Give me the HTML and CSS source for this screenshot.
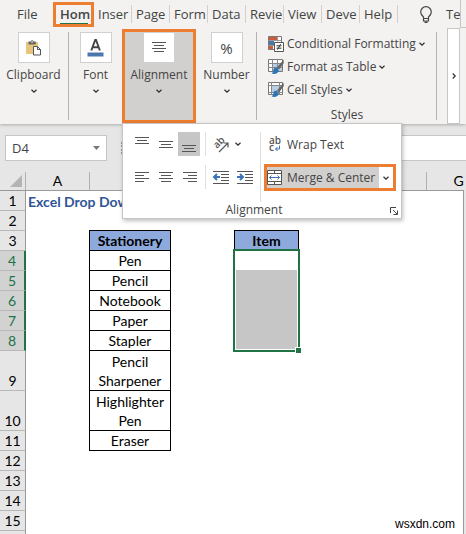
FILE: index.html
```
<!DOCTYPE html>
<html lang="en">
<head>
  <meta charset="UTF-8" />
  <meta name="viewport" content="width=device-width, initial-scale=1.0"/>
  <title>Excel Drop Down</title>
  <link rel="stylesheet" href="styles.css">
</head>
<body>

<!-- shared icons -->
<svg class="defs" width="0" height="0" aria-hidden="true">
  <symbol id="chevron" viewBox="0 0 6 4"><path d="M.5 .7 3 3.1 5.5 .7" fill="none" stroke="#333" stroke-width="1.3"/></symbol>
  <symbol id="brush" viewBox="0 0 16 16">
    <path d="M15.5 .5 9 8.5l2 2L15.800 4z" fill="#666"/>
    <path d="M8.500 8.500c-2 0-3 1.300-3.200 3-.1 1.300-.8 2.300-1.800 3 3 1 7 .5 7.300-3.500z" fill="#2e75b6"/>
  </symbol>
</svg>

<!-- Ribbon -->
<header class="ribbon">
  <nav class="tabs">
    <button class="tab file">File</button>
    <button class="tab active"><span>Hom</span></button>
    <button class="tab">Inser</button>
    <button class="tab">Page</button>
    <button class="tab">Form</button>
    <button class="tab">Data</button>
    <button class="tab">Revie</button>
    <button class="tab">View</button>
    <button class="tab">Deve</button>
    <button class="tab">Help</button>
    <button class="tell">
      <svg width="12" height="17" viewBox="0 0 12 17" fill="none" stroke="#444" stroke-width="1.200">
        <path d="M3.500 12.500V11C2 9.600.7 8 .7 6a5.300 5.300 0 0 1 10.600 0c0 2-1.300 3.600-2.800 5v1.500zM3.500 12.500V15h5v-2.500M4.500 16.300h3"/>
      </svg>
      <span>Te</span>
    </button>
    <span class="edge"></span>
  </nav>

  <div class="groups">
    <div class="group clipboard">
      <button class="big">
        <span class="tile">
          <svg width="17" height="17" viewBox="0 0 17 17">
            <path d="M1 3h12v12H1z" fill="#e8c47c"/>
            <path d="M3.500 5.500V2.500H5.500a1.700 1.700 0 0 1 3.200 0h2v3z" fill="#666"/>
            <path d="M6.200 2.500h1.800v1H6.200z" fill="#fff"/>
            <path d="M8.500 7.500h4l3 3v5.500h-7z" fill="#fff" stroke="#555"/>
            <path d="M12.500 7.500v3h3" fill="none" stroke="#555"/>
          </svg>
        </span>
        <span>Clipboard</span>
        <svg class="chev"><use href="#chevron"/></svg>
      </button>
    </div>
    <div class="group font">
      <button class="big">
        <span class="tile">
          <svg width="17" height="18" viewBox="0 0 17 18">
            <path d="M4.300 11.500 8.200 1h.8l3.900 10.500M5.500 8.200h6.200" fill="none" stroke="#444" stroke-width="1.900"/>
            <path d="M.5 13.500h16v4H.5z" fill="#4a78ad"/>
          </svg>
        </span>
        <span>Font</span>
        <svg class="chev"><use href="#chevron"/></svg>
      </button>
    </div>
    <div class="group alignment">
      <button class="big open">
        <span class="tile">
          <svg width="14" height="13" viewBox="0 0 14 13" stroke="#555"><path d="M0 1.500h14M2 4.500h10M0 7.500h14M2 10.500h10"/></svg>
        </span>
        <span>Alignment</span>
        <svg class="chev"><use href="#chevron"/></svg>
      </button>

      <!-- Alignment flyout -->
      <div class="flyout">
        <div class="tools">
          <div class="pad">
            <div class="line">
              <button class="tool" aria-label="Top align"><svg class="al" viewBox="0 0 14 17"><path d="M0 1.500h14M2 4.500h10M0 7.500h14"/></svg></button>
              <button class="tool" aria-label="Middle align"><svg class="al" viewBox="0 0 14 17"><path d="M0 5.500h14M2 8.500h10M0 11.500h14"/></svg></button>
              <button class="tool on" aria-label="Bottom align"><svg class="al" viewBox="0 0 14 17"><path d="M0 9.500h14M2 12.500h10M0 15.500h14"/></svg></button>
            </div>
            <div class="line">
              <button class="tool" aria-label="Align left"><svg class="al" viewBox="0 0 14 17"><path d="M0 3.500h14M0 6.500h9M0 9.500h14M0 12.500h9"/></svg></button>
              <button class="tool" aria-label="Center"><svg class="al" viewBox="0 0 14 17"><path d="M0 3.500h14M2 6.500h10M0 9.500h14M2 12.500h10"/></svg></button>
              <button class="tool" aria-label="Align right"><svg class="al" viewBox="0 0 14 17"><path d="M0 3.500h14M5 6.500h9M0 9.500h14M5 12.500h9"/></svg></button>
            </div>
          </div>
          <div class="pad split">
            <div class="line">
              <button class="tool orient" aria-label="Orientation">
                <svg width="17" height="17" viewBox="0 0 17 17">
                  <text class="ab" x="5" y="13" transform="rotate(-45 5 13)">ab</text>
                  <path d="M7 16 15.500 7.500M11.500 7h4.500v4.500" fill="none" stroke="#555" stroke-width="1.200"/>
                </svg>
                <svg class="chev"><use href="#chevron"/></svg>
              </button>
            </div>
            <div class="line">
              <button class="tool" aria-label="Decrease indent">
                <svg width="16" height="14" viewBox="0 0 16 14"><path d="M0 1.500h16M8 4.500h8M8 7.500h8M8 10.500h8M0 13.500h16" stroke="#555"/><path d="M7 7H1.500M4 4 1 7l3 3" fill="none" stroke="#3b74b4" stroke-width="2"/></svg>
              </button>
              <button class="tool" aria-label="Increase indent">
                <svg width="16" height="14" viewBox="0 0 16 14"><path d="M0 1.500h16M8 4.500h8M8 7.500h8M8 10.500h8M0 13.500h16" stroke="#555"/><path d="M0 7h5.500M3 4l3 3-3 3" fill="none" stroke="#3b74b4" stroke-width="2"/></svg>
              </button>
            </div>
          </div>
          <div class="pad wide">
            <button class="wrap">
              <svg width="14" height="18" viewBox="0 0 14 18">
                <text class="abc" x="1" y="9">ab</text>
                <text class="abc" x="1" y="16">c</text>
                <path d="M11.500 10.500v3.500H7.500M9.500 12l-2 2 2 2" fill="none" stroke="#3b74b4"/>
              </svg>
              Wrap Text
            </button>
            <div class="merge">
              <button class="merge-main">
                <svg width="15" height="15" viewBox="0 0 15 15" fill="none">
                  <path d="M.5 .5h14v14H.5z" fill="#fff"/>
                  <path d="M.5 .5h14v14H.5zM.5 3.500h14M.5 11.500h14M7.500 .5v3M7.500 11.500v3" stroke="#555"/>
                  <path d="M2.500 7.500h10M4.500 5.500l-2 2 2 2M10.500 5.500l2 2-2 2" stroke="#3b74b4"/>
                </svg>
                Merge &amp; Center
              </button>
              <button class="merge-more" aria-label="More merge options"><svg class="chev"><use href="#chevron"/></svg></button>
            </div>
          </div>
        </div>
        <div class="caption">
          Alignment
          <button class="launcher" aria-label="Alignment settings">
            <svg width="8" height="8" viewBox="0 0 8 8" fill="none" stroke="#444"><path d="M.5 6V.5H6M3 3l4 4M7.500 3.500v4h-4"/></svg>
          </button>
        </div>
      </div>
    </div>
    <div class="group number">
      <button class="big">
        <span class="tile percent">%</span>
        <span>Number</span>
        <svg class="chev"><use href="#chevron"/></svg>
      </button>
    </div>
    <div class="group styles">
      <button class="small">
        <svg width="16" height="16" viewBox="0 0 16 16">
          <path d="M.5 .5h13v13H.5z" fill="#fff" stroke="#777"/>
          <path d="M1 1h8v3.500H1zM1 9.500h4V13H1z" fill="#d05a3c"/><path d="M1 5h5v4H1z" fill="#4a78ad"/>
          <path d="M.5 4.500h13M.5 9.500h6M9.500 .5v5" stroke="#999"/>
          <path d="M6.500 6.500h9v9h-9z" fill="#fff" stroke="#555"/>
          <path d="M8.500 9.800h5M8.500 12.200h5M12.500 8.200l-3 5.500" stroke="#333"/>
        </svg>
        Conditional Formatting <svg class="chev"><use href="#chevron"/></svg>
      </button>
      <button class="small">
        <svg width="16" height="16" viewBox="0 0 16 16">
          <path d="M.5 .5h14v12H.5z" fill="#fff" stroke="#777"/>
          <path d="M5 5h9v7H5z" fill="#b9cde5"/>
          <path d="M.5 4.500h14M.5 8.500h14M4.500 .5v12M9.500 .5v12" stroke="#888"/>
          <use href="#brush"/>
        </svg>
        Format as Table <svg class="chev"><use href="#chevron"/></svg>
      </button>
      <button class="small">
        <svg width="16" height="16" viewBox="0 0 16 16">
          <path d="M.5 .5h14v12H.5z" fill="#fff" stroke="#777"/>
          <path d="M4 4h8v6H4z" fill="#b9cde5"/>
          <path d="M.5 3.500h14M3.500 .5v12M11.500 .5v12M.5 10.500h14" stroke="#888"/>
          <use href="#brush"/>
        </svg>
        Cell Styles <svg class="chev"><use href="#chevron"/></svg>
      </button>
      <div class="group-name">Styles</div>
    </div>
    <button class="scroll" aria-label="Scroll ribbon">
      <svg width="4" height="6" viewBox="0 0 4 6"><path d="M.7 .5 3.200 3 .7 5.500" fill="none" stroke="#333" stroke-width="1.200"/></svg>
    </button>
  </div>
</header>

<!-- Formula bar -->
<div class="formula-bar">
  <div class="name-box">
    <input type="text" value="D4" aria-label="Name box">
    <button aria-label="Names"><svg width="7" height="4" viewBox="0 0 7 4"><path d="M0 0h7L3.500 4z" fill="#777"/></svg></button>
  </div>
  <span class="dots"></span>
  <input class="formula" type="text" aria-label="Formula">
</div>

<!-- Sheet -->
<main class="sheet">
  <table>
    <colgroup>
      <col class="c-head"><col class="c-a"><col class="c-b"><col class="c-a"><col class="c-a"><col class="c-a"><col class="c-a"><col class="c-a">
    </colgroup>
    <thead>
      <tr><th class="corner"><svg width="12" height="12" viewBox="0 0 12 12"><path d="M12 0v12H0z" fill="#b4b4b4"/></svg></th><th>A</th><th></th><th></th><th></th><th></th><th></th><th>G</th></tr>
    </thead>
    <tbody>
      <tr><th>1</th><td class="title" colspan="7">Excel Drop Down</td></tr>
      <tr><th>2</th><td colspan="7"></td></tr>
      <tr><th>3</th><td></td><td class="box head">Stationery</td><td></td><td class="box head">Item</td><td colspan="3"></td></tr>
      <tr class="sel"><th>4</th><td></td><td class="box">Pen</td><td></td><td class="range-start"><div class="range"></div></td><td colspan="3"></td></tr>
      <tr class="sel"><th>5</th><td></td><td class="box">Pencil</td><td colspan="5"></td></tr>
      <tr class="sel"><th>6</th><td></td><td class="box">Notebook</td><td colspan="5"></td></tr>
      <tr class="sel"><th>7</th><td></td><td class="box">Paper</td><td colspan="5"></td></tr>
      <tr class="sel"><th>8</th><td></td><td class="box">Stapler</td><td colspan="5"></td></tr>
      <tr class="tall"><th>9</th><td></td><td class="box">Pencil<br>Sharpener</td><td colspan="5"></td></tr>
      <tr class="tall"><th>10</th><td></td><td class="box">Highlighter<br>Pen</td><td colspan="5"></td></tr>
      <tr><th>11</th><td></td><td class="box">Eraser</td><td colspan="5"></td></tr>
      <tr><th>12</th><td colspan="7"></td></tr>
      <tr><th>13</th><td colspan="7"></td></tr>
      <tr><th>14</th><td colspan="7"></td></tr>
      <tr><th>15</th><td colspan="7"></td></tr>
      <tr><th></th><td colspan="7"></td></tr>
    </tbody>
  </table>
</main>

<div class="watermark">wsxdn.com</div>

</body>
</html>
```
FILE: styles.css
```
* { margin: 0; padding: 0; box-sizing: border-box; }

html, body {
  height: 100%;
  overflow: hidden;
}

body {
  display: flex;
  flex-direction: column;
  position: relative;
  background: #e6e6e6;
  color: #444;
  font-family: "Open Sans", "Noto Sans", sans-serif;
  font-size: 12px;
}

button, input {
  font: inherit;
  color: inherit;
  background: none;
  border: none;
}

svg { display: block; flex: none; overflow: visible; }
.defs { position: absolute; }
.chev { width: 6px; height: 4px; }

/* Ribbon */
.ribbon {
  position: relative;
  z-index: 2;
  background: #f3f2f1;
  box-shadow: 0 1px 3px rgba(0, 0, 0, 0.25);
}

.tabs {
  display: flex;
  align-items: center;
  height: 28px;
  font-size: 13px;
}

.tab {
  width: 38px;
  height: 18px;
  padding-left: 4px;
  border-right: 1px solid #d2d0ce;
  line-height: 18px;
  text-align: left;
  white-space: nowrap;
  overflow: hidden;
}

.tab.file {
  width: 53px;
  padding-left: 17px;
  border: none;
}

.tab.active {
  width: 41px;
  height: 25px;
  border: 3px solid #ed7d31;
  font-weight: 600;
}

.tab.active span {
  display: block;
  width: 28px;
  border-bottom: 1px solid #217346;
}

.tell {
  display: flex;
  align-items: center;
  gap: 14px;
  flex: 1;
  padding-left: 22px;
  overflow: hidden;
}

.edge {
  width: 6px;
  height: 28px;
  border-left: 1px solid #c8c6c4;
  border-bottom: 1px solid #c8c6c4;
}

.groups {
  display: flex;
  height: 96px;
}

.group { position: relative; padding: 4px 0; }

.clipboard { width: 69px; }
.font { width: 53px; }
.alignment { width: 74px; padding: 1px 0; }
.number { width: 61px; }

.clipboard::after, .number::after, .styles::after {
  content: "";
  position: absolute;
  top: 4px;
  right: 0;
  bottom: 4px;
  border-right: 1px solid #b5b3b1;
}

.big {
  display: flex;
  flex-direction: column;
  align-items: center;
  width: 100%;
  line-height: 16px;
}

.big .chev { margin-top: 6px; }
.clipboard .big { padding-right: 2px; }

.big.open {
  height: 94px;
  background: #d2d0ce;
  border: 3px solid #ed7d31;
}

.tile {
  display: flex;
  align-items: center;
  justify-content: center;
  width: 32px;
  height: 31px;
  margin-bottom: 4px;
  background: #fff;
  border: 1px solid #d2d0ce;
}

.percent { font-size: 15px; }

.group.styles {
  flex: 1;
  display: flex;
  flex-direction: column;
  padding: 4px 0 0 11px;
}

.small {
  display: flex;
  flex: none;
  align-items: center;
  gap: 3px;
  height: 23px;
  white-space: nowrap;
}

.group-name {
  margin-top: 6px;
  padding-right: 11px;
  line-height: 16px;
  text-align: center;
}

.scroll {
  display: flex;
  align-items: center;
  justify-content: center;
  width: 13px;
  margin: 0 6px 0 10px;
  background: #fff;
  border: 1px solid #c8c6c4;
}

/* Alignment flyout */
.flyout {
  position: absolute;
  top: 95px;
  left: 0;
  width: 280px;
  background: #fff;
  border: 1px solid #c8c6c4;
  box-shadow: 1px 2px 4px rgba(0, 0, 0, 0.25);
}

.tools {
  display: flex;
  height: 78px;
  padding: 8px 5px 0 7px;
}

.pad {
  display: flex;
  flex-direction: column;
  gap: 9px;
}

.line {
  display: flex;
  height: 24px;
}

.tool {
  display: flex;
  align-items: center;
  justify-content: center;
  gap: 6px;
  width: 24px;
}

.tool.on { width: 22px; background: #c6c6c6; }
.tool.orient { width: 34px; }
.al { width: 14px; height: 17px; stroke: #555; }

.split {
  width: 56px;
  margin-left: 3px;
  border-right: 1px solid #e1dfdd;
}

.split .line {
  padding-left: 3px;
  border-left: 1px solid #e1dfdd;
}

.wide { flex: 1; gap: 8px; padding-left: 3px; }

.wrap, .merge-main {
  display: flex;
  align-items: center;
  gap: 5px;
  white-space: nowrap;
}

.wrap { height: 24px; padding-left: 4px; }

.merge {
  display: flex;
  height: 27px;
  border: 3px solid #ed7d31;
}

.merge-main { flex: 1; background: #d2d0ce; }

.merge-more {
  display: flex;
  align-items: center;
  justify-content: center;
  width: 14px;
}

.caption {
  position: relative;
  height: 16px;
  line-height: 16px;
  padding-right: 16px;
  text-align: center;
}

.launcher {
  position: absolute;
  right: 3px;
  bottom: 3px;
}

.ab, .abc {
  font-size: 10px;
  font-weight: 600;
  fill: #555;
}

/* Formula bar */
.formula-bar {
  display: flex;
  align-items: center;
  height: 48px;
  padding-left: 5px;
}

.name-box {
  display: flex;
  width: 102px;
  height: 26px;
  background: #fff;
  border: 1px solid #c6c6c6;
}

.name-box input {
  flex: 1;
  min-width: 0;
  padding-left: 6px;
  font-size: 13px;
}

.name-box button { padding: 0 6px; }

.dots {
  width: 2px;
  height: 12px;
  margin: 0 14px;
  border-left: 2px dotted #999;
}

.formula {
  flex: 1;
  min-width: 0;
  height: 26px;
  background: #fff;
  border: 1px solid #c6c6c6;
  border-right: none;
}

/* Sheet */
.sheet {
  flex: 1;
  min-height: 0;
  margin-right: 2px;
  overflow: hidden;
  position: relative;
}

.sheet::after {
  content: "";
  position: absolute;
  top: 18px;
  right: 0;
  bottom: 0;
  border-right: 1px solid #999;
}

table {
  width: 491px;
  table-layout: fixed;
  border-spacing: 0;
  color: #000;
  font-family: Lato, "Open Sans", sans-serif;
  font-size: 14px;
  line-height: 19px;
}

.c-head { width: 26px; }
.c-a { width: 64px; }
.c-b { width: 81px; }

thead th {
  height: 19px;
  line-height: 18px;
  border-right: 1px solid #b0b0b0;
  border-bottom: 1px solid #999;
  font-weight: normal;
}

.corner svg { margin-left: 10px; }

tbody th {
  height: 20px;
  border-right: 1px solid #999;
  border-bottom: 1px solid #b8b8b8;
  background: #e6e6e6;
  font-weight: normal;
  vertical-align: bottom;
}

tbody td { background: #fff; }

.sel th {
  background: #d2d2d2;
  border-right: 2px solid #217346;
  color: #217346;
}

.title {
  padding-left: 2px;
  color: #2f5597;
  font-weight: bold;
}

.box {
  border-bottom: 1px solid #000;
  border-right: 1px solid #000;
  box-shadow: -1px 0 0 #000;
  text-align: center;
}

.head {
  background: #8ea9db;
  box-shadow: -1px 0 0 #000, 0 -1px 0 #000, -1px -1px 0 #000;
  font-weight: bold;
}

.tall th { height: 40px; }

/* selection frame over D4:D8, first cell stays white */
.range-start { position: relative; }

.range {
  position: absolute;
  top: -2px;
  left: -2px;
  right: -1px;
  height: 103px;
  padding: 1px;
  border: 2px solid #217346;
  background: linear-gradient(#fff 18px, #c6c6c6 18px) content-box, #fff;
}

.range::after {
  content: "";
  position: absolute;
  right: -3px;
  bottom: -3px;
  width: 5px;
  height: 5px;
  background: #217346;
  outline: 1px solid #fff;
}

.watermark {
  position: absolute;
  right: 11px;
  bottom: 3px;
  color: #000;
  font-family: "Liberation Sans", Arial, sans-serif;
  font-size: 12px;
  line-height: 14px;
}
```
